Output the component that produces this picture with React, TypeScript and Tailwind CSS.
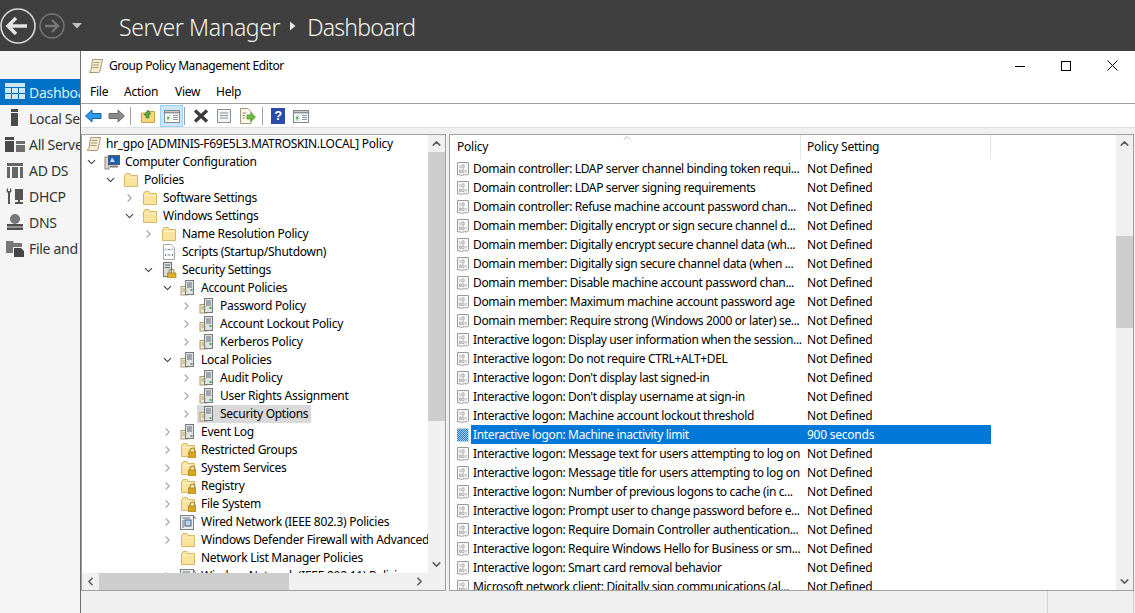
import { ChevronDown, ChevronLeft, ChevronRight, ChevronUp } from 'lucide-react';

const FONT = "font-['Noto_Sans','Open_Sans',sans-serif]";

function Folder({ lock }: { lock?: boolean }) {
  return (
    <svg width="16" height="16" viewBox="0 0 16 16" className="shrink-0">
      <path d="M1.5 3.5 V14.5 H14.5 V3.5 H8 L7 1.5 H3 L2 3.5 Z" fill="#fbe29d" stroke="#d8b868" />
      <path d="M2.5 5.5 H13.5" stroke="#fff3c9" />
      {lock && (
        <g>
          <path d="M10 10 V8.5 a2.5 2.5 0 0 1 5 0 V10" fill="none" stroke="#8f7420" />
          <rect x="8.5" y="10" width="7.5" height="6" fill="#d9a520" stroke="#9a7a1c" strokeWidth="0.6" />
        </g>
      )}
    </svg>
  );
}

function Scroll({ size = 16 }: { size?: number }) {
  return (
    <svg width={size} height={size} viewBox="0 0 16 16" className="shrink-0">
      <path d="M4.5 1.5 H14.5 L12 13 C12 15 10 14.5 9 14.5 H1.5 C1 13 2.5 12.5 3 12.5 Z" fill="#f6ecd0" stroke="#a89a78" />
      <path d="M5.5 4.5 H11.5 M5 7 H11 M4.5 9.5 H10.5" stroke="#a89a78" />
    </svg>
  );
}

function ComputerIcon() {
  return (
    <svg width="16" height="16" viewBox="0 0 16 16" className="shrink-0">
      <rect x="1" y="3" width="4" height="12" fill="#d5d5d5" stroke="#8a8a8a" />
      <rect x="4.5" y="1.5" width="11" height="9" fill="#1a5fb4" stroke="#5a5a5a" />
      <path d="M8 3.5 L11 8 H6 Z" fill="#cfe4fa" />
      <path d="M6 12.5 H14" stroke="#7a7a7a" strokeWidth="2" />
    </svg>
  );
}

function ScriptDoc() {
  return (
    <svg width="16" height="16" viewBox="0 0 16 16" className="shrink-0">
      <path d="M2.5 .5 H10 L13.5 4 V15.5 H2.5 Z" fill="#fff" stroke="#a7a7a7" />
      <path d="M5 4.5 L4 5.5 L5 6.5 M11 4.5 L12 5.5 L11 6.5 M5 10 L4 11 L5 12 M11 10 L12 11 L11 12 M6.5 5.5 H9.5 M6.5 11 H9.5" stroke="#6d7f95" fill="none" />
    </svg>
  );
}

function SecurityIcon() {
  return (
    <svg width="16" height="16" viewBox="0 0 16 16" className="shrink-0">
      <rect x="2.5" y="0.5" width="8" height="14" fill="#d8dde2" stroke="#6c7278" />
      <path d="M4 3 H9 M4 5.5 H9" stroke="#5f6a75" />
      <path d="M8 11 V9.5 a2.5 2.5 0 0 1 5 0 V11" fill="none" stroke="#8f7420" />
      <rect x="6.5" y="11" width="8.5" height="5" fill="#dfae2a" stroke="#9a7a1c" strokeWidth="0.6" />
    </svg>
  );
}

function ServerPair({ single }: { single?: boolean }) {
  return (
    <svg width="16" height="16" viewBox="0 0 16 16" className="shrink-0">
      <rect x="1" y="6.5" width="7" height="8.5" fill="#f1e9c9" stroke="#a89c75" />
      <rect x="5.5" y="0.5" width="8" height="14" fill="#dfe2e4" stroke="#757a7f" />
      <path d="M7 3 H12 M7 5 H12 M7 7 H12" stroke="#646a70" />
      {!single && <rect x="10.5" y="9" width="2" height="2" fill="#4caf50" />}
      {single && <rect x="10.5" y="11" width="2" height="2" fill="#4caf50" />}
      <path d="M2.5 9 H6.5 M2.5 11 H6.5" stroke="#a89c75" />
    </svg>
  );
}

function WiredIcon() {
  return (
    <svg width="16" height="16" viewBox="0 0 16 16" className="shrink-0">
      <rect x="0.5" y="1.5" width="13" height="14" fill="#eceef0" stroke="#7b8087" />
      <rect x="5" y="6" width="6" height="6" fill="#bcd4ea" stroke="#3d5f85" />
      <path d="M2.5 4 H10 M3 6 V14 M14 2 L15.5 5" stroke="#6b7178" fill="none" />
    </svg>
  );
}

function PolicyIcon({ active }: { active?: boolean }) {
  if (active) {
    return (
      <svg width="14" height="14" viewBox="0 0 14 14" className="shrink-0">
        <defs>
          <pattern id="dither" width="2" height="2" patternUnits="userSpaceOnUse">
            <rect width="2" height="2" fill="#2a7cc0" />
            <rect width="1" height="1" fill="#a8cde8" />
            <rect x="1" y="1" width="1" height="1" fill="#a8cde8" />
          </pattern>
        </defs>
        <path d="M1 0.5 H12.5 V13.5 H1 Z" fill="url(#dither)" />
      </svg>
    );
  }
  return (
    <svg width="14" height="14" viewBox="0 0 14 14" className="shrink-0">
      <path d="M1.5 0.5 H12.5 V12 C11 14 9 12 7 13 C5 14 3 12 1.5 13 Z" fill="#f7f7f7" stroke="#9a9a9a" />
      <path d="M4 3 V6 M6 3 H8 V6 H6 Z M6 8 H8 V10.5 H6 Z M10 8 V10.5 M3.5 8 H5 V10.5 H3.5 Z" fill="none" stroke="#a8a8a8" strokeWidth="0.9" />
    </svg>
  );
}

type TreeRow = {
  pad: string;
  label: string;
  arrow?: 'open' | 'closed';
  icon: React.ReactNode;
  selected?: boolean;
  root?: boolean;
};

const treeRows: TreeRow[] = [
  { pad: 'pl-[4px]', label: 'hr_gpo [ADMINIS-F69E5L3.MATROSKIN.LOCAL] Policy', icon: <Scroll />, root: true },
  { pad: 'pl-[3px]', label: 'Computer Configuration', arrow: 'open', icon: <ComputerIcon /> },
  { pad: 'pl-[22px]', label: 'Policies', arrow: 'open', icon: <Folder /> },
  { pad: 'pl-[41px]', label: 'Software Settings', arrow: 'closed', icon: <Folder /> },
  { pad: 'pl-[41px]', label: 'Windows Settings', arrow: 'open', icon: <Folder /> },
  { pad: 'pl-[60px]', label: 'Name Resolution Policy', arrow: 'closed', icon: <Folder /> },
  { pad: 'pl-[60px]', label: 'Scripts (Startup/Shutdown)', icon: <ScriptDoc /> },
  { pad: 'pl-[60px]', label: 'Security Settings', arrow: 'open', icon: <SecurityIcon /> },
  { pad: 'pl-[79px]', label: 'Account Policies', arrow: 'open', icon: <ServerPair /> },
  { pad: 'pl-[98px]', label: 'Password Policy', arrow: 'closed', icon: <ServerPair /> },
  { pad: 'pl-[98px]', label: 'Account Lockout Policy', arrow: 'closed', icon: <ServerPair /> },
  { pad: 'pl-[98px]', label: 'Kerberos Policy', arrow: 'closed', icon: <ServerPair /> },
  { pad: 'pl-[79px]', label: 'Local Policies', arrow: 'open', icon: <ServerPair single /> },
  { pad: 'pl-[98px]', label: 'Audit Policy', arrow: 'closed', icon: <ServerPair single /> },
  { pad: 'pl-[98px]', label: 'User Rights Assignment', arrow: 'closed', icon: <ServerPair single /> },
  { pad: 'pl-[98px]', label: 'Security Options', arrow: 'closed', icon: <ServerPair single />, selected: true },
  { pad: 'pl-[79px]', label: 'Event Log', arrow: 'closed', icon: <ServerPair single /> },
  { pad: 'pl-[79px]', label: 'Restricted Groups', arrow: 'closed', icon: <Folder lock /> },
  { pad: 'pl-[79px]', label: 'System Services', arrow: 'closed', icon: <Folder lock /> },
  { pad: 'pl-[79px]', label: 'Registry', arrow: 'closed', icon: <Folder lock /> },
  { pad: 'pl-[79px]', label: 'File System', arrow: 'closed', icon: <Folder lock /> },
  { pad: 'pl-[79px]', label: 'Wired Network (IEEE 802.3) Policies', arrow: 'closed', icon: <WiredIcon /> },
  { pad: 'pl-[79px]', label: 'Windows Defender Firewall with Advanced Security', arrow: 'closed', icon: <Folder /> },
  { pad: 'pl-[79px]', label: 'Network List Manager Policies', icon: <Folder /> },
  { pad: 'pl-[79px]', label: 'Wireless Network (IEEE 802.11) Policies', arrow: 'closed', icon: <WiredIcon /> },
];

const policies = [
  'Domain controller: LDAP server channel binding token requi...',
  'Domain controller: LDAP server signing requirements',
  'Domain controller: Refuse machine account password chan...',
  'Domain member: Digitally encrypt or sign secure channel d...',
  'Domain member: Digitally encrypt secure channel data (wh...',
  'Domain member: Digitally sign secure channel data (when ...',
  'Domain member: Disable machine account password chan...',
  'Domain member: Maximum machine account password age',
  'Domain member: Require strong (Windows 2000 or later) se...',
  'Interactive logon: Display user information when the session...',
  'Interactive logon: Do not require CTRL+ALT+DEL',
  "Interactive logon: Don't display last signed-in",
  "Interactive logon: Don't display username at sign-in",
  'Interactive logon: Machine account lockout threshold',
  'Interactive logon: Machine inactivity limit',
  'Interactive logon: Message text for users attempting to log on',
  'Interactive logon: Message title for users attempting to log on',
  'Interactive logon: Number of previous logons to cache (in c...',
  'Interactive logon: Prompt user to change password before e...',
  'Interactive logon: Require Domain Controller authentication...',
  'Interactive logon: Require Windows Hello for Business or sm...',
  'Interactive logon: Smart card removal behavior',
  'Microsoft network client: Digitally sign communications (al...',
];

const sideItems = ['Local Server', 'All Servers', 'AD DS', 'DHCP', 'DNS', 'File and Storage'];

function SideIcon({ index }: { index: number }) {
  const shapes = [
    <g key="0"><path d="M6 1 H13 V4 H6 Z M6 5 H13 V18 H6 Z" fill="#4a4a4a" /></g>,
    <g key="1"><path d="M0 3 H9 V6 H0 Z M0 7 H9 V18 H0 Z" fill="#4a4a4a" /><path d="M11 7 H20 V10 H11 Z M11 11 H20 V18 H11 Z" fill="#6e6e6e" /></g>,
    <path key="2" d="M2 3 H18 V6 H2 Z M2 7 H5 V18 H2 Z M15 7 H18 V18 H15 Z M7 7 H13 V18 H7 Z" fill="#666" />,
    <path key="3" d="M3 2 V5 H5 V2 C7 3 7 6 5 7 V18 H3 V7 C1 6 1 3 3 2 Z M10 3 H18 V14 H15 V16 H18 V18 H10 V16 H13 V14 H10 Z" fill="#555" />,
    <g key="4"><circle cx="10" cy="7" r="5" fill="#777" /><path d="M2 12 H18 V18 H2 Z" fill="#4f4f4f" /><path d="M2 15 H18" stroke="#ddd" /></g>,
    <g key="5"><path d="M1 3 H8 L9 5 H17 V9 H8 V15 H1 Z" fill="#777" /><path d="M9 10 H16 L19 13 V19 H9 Z" fill="#444" /></g>,
  ];
  return (
    <svg width="20" height="20" viewBox="0 0 20 20" className="shrink-0">
      {shapes[index]}
    </svg>
  );
}

function Sidebar() {
  return (
    <div className="w-[80px] shrink-0 overflow-hidden bg-[#f5f5f5] pt-[28px] font-['Noto_Sans',sans-serif] text-[14px] tracking-[-0.3px] whitespace-nowrap text-[#333]">
      <div className="flex h-[26px] items-center gap-[4px] bg-[#0072c6] pl-[5px] text-[#d9ecfa]">
        <svg width="20" height="18" viewBox="0 0 20 18" className="shrink-0">
          <path d="M0 0 H20 V4 H0 Z" fill="#cfe6f7" />
          <path d="M0 5 H6 V10 H0 Z M7 5 H13 V10 H7 Z M14 5 H20 V10 H14 Z M0 11 H6 V16 H0 Z M7 11 H13 V16 H7 Z M14 11 H20 V16 H14 Z" fill="#cfe6f7" />
        </svg>
        <span className="pt-[1px]">Dashboard</span>
      </div>
      {sideItems.map((item, i) => (
        <div key={item} className="flex h-[26px] items-center gap-[4px] pl-[5px]">
          <SideIcon index={i} />
          <span className="pt-[1px]">{item}</span>
        </div>
      ))}
    </div>
  );
}

function ConsoleIcon({ dark }: { dark?: boolean }) {
  return (
    <svg width="16" height="16" viewBox="0 0 16 16">
      <rect x="0.5" y="2.5" width="15" height="12" fill="#fff" stroke="#7d8790" />
      <path d="M1 4.5 H15" stroke="#8b949c" strokeWidth="2" />
      <rect x="2.5" y="7" width="4" height="6" fill={dark ? '#d9f0d6' : '#cfe6cc'} />
      <path d="M3.5 8.5 L5.5 10 L3.5 11.5 Z" fill="#2f7f3a" />
      <path d="M9 7.5 H14 M9 9.5 H14 M9 11.5 H14" stroke="#8b949c" />
    </svg>
  );
}

function Toolbar() {
  return (
    <div className="flex h-[23px] shrink-0 items-center bg-white pl-[4px]">
      <svg width="17" height="14" viewBox="0 0 17 14" className="mr-[6px]">
        <path d="M0.5 7 L7 1 V4.5 H16 V9.5 H7 V13 Z" fill="#2e9bea" stroke="#14649f" />
      </svg>
      <svg width="17" height="14" viewBox="0 0 17 14">
        <path d="M16.5 7 L10 1 V4.5 H1 V9.5 H10 V13 Z" fill="#8c8c8c" stroke="#6a6a6a" />
      </svg>
      <div className="ml-[5px] h-[18px] w-px bg-[#a0a0a0]" />
      <div className="ml-[9px]">
        <svg width="16" height="16" viewBox="0 0 16 16">
          <path d="M1.5 5 H7 L8 3.5 H14.5 V14.5 H1.5 Z" fill="#f6d77c" stroke="#c7a24a" />
          <path d="M4 7 L8 2 L11 6 H9 V10 H6 V7 Z" fill="#54a845" stroke="#2f7a2d" strokeWidth="0.6" />
        </svg>
      </div>
      <div className="ml-[4px] flex h-[22px] w-[23px] items-center justify-center border border-[#99d1ff] bg-[#cce8ff]">
        <ConsoleIcon dark />
      </div>
      <div className="ml-[1px] h-[18px] w-px bg-[#a0a0a0]" />
      <div className="ml-[8px]">
        <svg width="16" height="14" viewBox="0 0 16 14" className="block">
          <path d="M2 1.5 L14 12.5 M14 1.5 L2 12.5" stroke="#3c3c3c" strokeWidth="3.4" />
        </svg>
      </div>
      <div className="ml-[7px]">
        <svg width="16" height="16" viewBox="0 0 16 16" className="block">
          <rect x="1.5" y="1.5" width="13" height="13" fill="#f2f2f2" stroke="#8c959c" />
          <path d="M4 5 H12 M4 7.5 H12 M4 10 H12" stroke="#8c959c" />
        </svg>
      </div>
      <div className="ml-[7px]">
        <svg width="17" height="16" viewBox="0 0 17 16" className="block">
          <path d="M1.5 0.5 H9 L12 3.5 V15.5 H1.5 Z" fill="#fbf7e8" stroke="#a29a80" />
          <path d="M3.5 5 H7 M3.5 7.5 H6 M3.5 10 H6" stroke="#8c8c7a" />
          <path d="M8 7 H12 V4.5 L16.5 9 L12 13.5 V11 H8 Z" fill="#6cbb3c" stroke="#3f8a26" strokeWidth="0.6" />
        </svg>
      </div>
      <div className="ml-[6px] h-[18px] w-px bg-[#a0a0a0]" />
      <div className="ml-[8px] mr-[8px] flex h-[16px] w-[14px] items-center justify-center bg-[#2c4aa8] font-['Liberation_Sans',sans-serif] text-[13px] font-bold text-white">
        ?
      </div>
      <ConsoleIcon />
    </div>
  );
}

function VScroll({ thumbTop, thumbHeight }: { thumbTop: string; thumbHeight: string }) {
  return (
    <div className="flex w-[17px] shrink-0 flex-col bg-[#f0f0f0]">
      <div className="flex h-[17px] shrink-0 items-center justify-center">
        <ChevronUp size={13} strokeWidth={3} color="#606060" />
      </div>
      <div className="min-h-0 flex-1">
        <div className={`${thumbTop} ${thumbHeight} bg-[#cdcdcd]`} />
      </div>
      <div className="flex h-[17px] shrink-0 items-center justify-center">
        <ChevronDown size={13} strokeWidth={3} color="#606060" />
      </div>
    </div>
  );
}

function TreePane() {
  return (
    <div className="flex w-[365px] shrink-0 flex-col border border-[#a0a0a0] bg-white">
      <div className="flex min-h-0 flex-1">
        <div className="min-w-0 flex-1 overflow-hidden tracking-[-0.28px] whitespace-nowrap">
          {treeRows.map((row) => (
            <div key={row.label} className={`flex h-[18px] items-center ${row.pad}`}>
              {!row.root && (
                <div className="mr-[4px] flex w-[13px] shrink-0 items-center justify-center">
                  {row.arrow === 'open' && <ChevronDown size={18} strokeWidth={2} color="#404040" />}
                  {row.arrow === 'closed' && <ChevronRight size={18} strokeWidth={2} color="#a6a6a6" />}
                </div>
              )}
              <div className={`flex h-[18px] items-center pr-[3px] ${row.root ? '' : 'pl-[2px]'} ${row.selected ? 'bg-[#d9d9d9]' : ''}`}>
                {row.icon}
                <span className={row.root ? 'ml-[4px]' : 'ml-[5px]'}>{row.label}</span>
              </div>
            </div>
          ))}
        </div>
        <VScroll thumbTop="mt-0" thumbHeight="h-[269px]" />
      </div>
      <div className="flex h-[17px] shrink-0 items-center bg-[#f0f0f0]">
        <div className="flex w-[17px] shrink-0 items-center justify-center">
          <ChevronLeft size={13} strokeWidth={3} color="#606060" />
        </div>
        <div className="h-[17px] w-[190px] bg-[#cdcdcd]" />
        <div className="flex-1" />
        <div className="mr-[17px] flex w-[17px] shrink-0 items-center justify-center">
          <ChevronRight size={13} strokeWidth={3} color="#606060" />
        </div>
      </div>
    </div>
  );
}

function PolicyPane() {
  return (
    <div className="ml-[3px] flex min-w-0 flex-1 border border-[#a0a0a0] bg-white">
      <div className="min-w-0 flex-1 overflow-hidden whitespace-nowrap">
        <div className="relative flex h-[24px] items-center">
          <div className="flex h-[24px] w-[351px] items-center border-r border-[#e5e5e5] pl-[7px]">Policy</div>
          <div className="flex h-[24px] w-[190px] items-center border-r border-[#e5e5e5] pl-[6px]">Policy Setting</div>
          <div className="absolute top-[-3px] left-[171px]">
            <ChevronUp size={12} strokeWidth={1.2} color="#8a8a8a" />
          </div>
        </div>
        {policies.map((name) => {
          const active = name.endsWith('inactivity limit');
          return (
            <div key={name} className="flex h-[19px] items-center">
              <div className="flex w-[21px] shrink-0 justify-end pr-[1px]">
                <PolicyIcon active={active} />
              </div>
              <div className={`flex h-[19px] w-[520px] shrink-0 items-center ${active ? 'bg-[#0078d7] text-white' : ''}`}>
                <span className="w-[336px] shrink-0 overflow-hidden pl-[2px] tracking-[-0.36px]">{name}</span>
                <span>{active ? '900 seconds' : 'Not Defined'}</span>
              </div>
            </div>
          );
        })}
      </div>
      <VScroll thumbTop="mt-[84px]" thumbHeight="h-[92px]" />
    </div>
  );
}

function EditorWindow() {
  return (
    <div className={`flex min-w-0 flex-1 flex-col border-l border-[#6e6e6e] bg-white ${FONT} text-[12px] tracking-[-0.24px] text-black`}>
      <div className="flex h-[29px] shrink-0 items-center pl-[7px]">
        <Scroll />
        <span className="ml-[5px] flex-1 tracking-[-0.4px]">Group Policy Management Editor</span>
        <div className="flex items-center">
          <div className="flex w-[46px] justify-center">
            <svg width="10" height="10" viewBox="0 0 10 10"><path d="M0 5.5 H10" stroke="#000" /></svg>
          </div>
          <div className="flex w-[46px] justify-center">
            <svg width="10" height="10" viewBox="0 0 10 10"><rect x="0.5" y="0.5" width="9" height="9" fill="none" stroke="#000" /></svg>
          </div>
          <div className="flex w-[46px] justify-center">
            <svg width="11" height="11" viewBox="0 0 11 11"><path d="M0.5 0.5 L10.5 10.5 M10.5 0.5 L0.5 10.5" stroke="#000" /></svg>
          </div>
        </div>
      </div>
      <div className="flex h-[24px] shrink-0 items-center border-b border-[#a0a0a0] pl-[9px]">
        <span className="w-[34px]">File</span>
        <span className="w-[51px]">Action</span>
        <span className="w-[41px]">View</span>
        <span>Help</span>
      </div>
      <Toolbar />
      <div className="flex min-h-0 flex-1 flex-col border-t border-[#e0e0e0] bg-[#f0f0f0]">
        <div className="flex min-h-0 flex-1 pt-[6px] pr-[1px]">
          <TreePane />
          <PolicyPane />
        </div>
        <div className="flex h-[22px] shrink-0 justify-end">
          <div className="w-[87px] border-x border-[#d0d0d0]" />
          <div className="w-px" />
        </div>
      </div>
    </div>
  );
}

export default function App() {
  return (
    <div className="flex h-[613px] w-[1135px] flex-col overflow-hidden bg-white">
      <div className="flex h-[51px] shrink-0 items-center bg-[#3f3f3f] text-[#f4f4ee]">
        <svg width="36" height="38" viewBox="0 0 36 38" className="shrink-0">
          <circle cx="18" cy="19" r="17" fill="none" stroke="#d8d8d8" strokeWidth="1.6" />
          <path d="M27 19 H9 M16 11 L8 19 L16 27" fill="none" stroke="#e4e4e4" strokeWidth="3.5" />
        </svg>
        <svg width="28" height="28" viewBox="0 0 28 28" className="ml-[2px] shrink-0">
          <circle cx="14" cy="14" r="12" fill="none" stroke="#777" strokeWidth="1.4" />
          <path d="M7 14 H20 M14 8 L20 14 L14 20" fill="none" stroke="#777" strokeWidth="2.4" />
        </svg>
        <svg width="12" height="8" viewBox="0 0 12 8" className="ml-[5px] shrink-0">
          <path d="M1 1 H11 L6 6.5 Z" fill="#c0c0c0" />
        </svg>
        <span className="ml-[36px] pt-[3px] font-['Noto_Sans',sans-serif] text-[23px] font-light tracking-[-0.4px]">Server Manager</span>
        <svg width="8" height="10" viewBox="0 0 8 10" className="ml-[9px] shrink-0">
          <path d="M1 0.5 L6.5 5 L1 9.5 Z" fill="#e8e8e8" />
        </svg>
        <span className="ml-[10px] pt-[3px] font-['Noto_Sans',sans-serif] text-[23px] font-light tracking-[-0.8px]">Dashboard</span>
      </div>
      <div className="flex min-h-0 flex-1">
        <Sidebar />
        <EditorWindow />
      </div>
    </div>
  );
}
